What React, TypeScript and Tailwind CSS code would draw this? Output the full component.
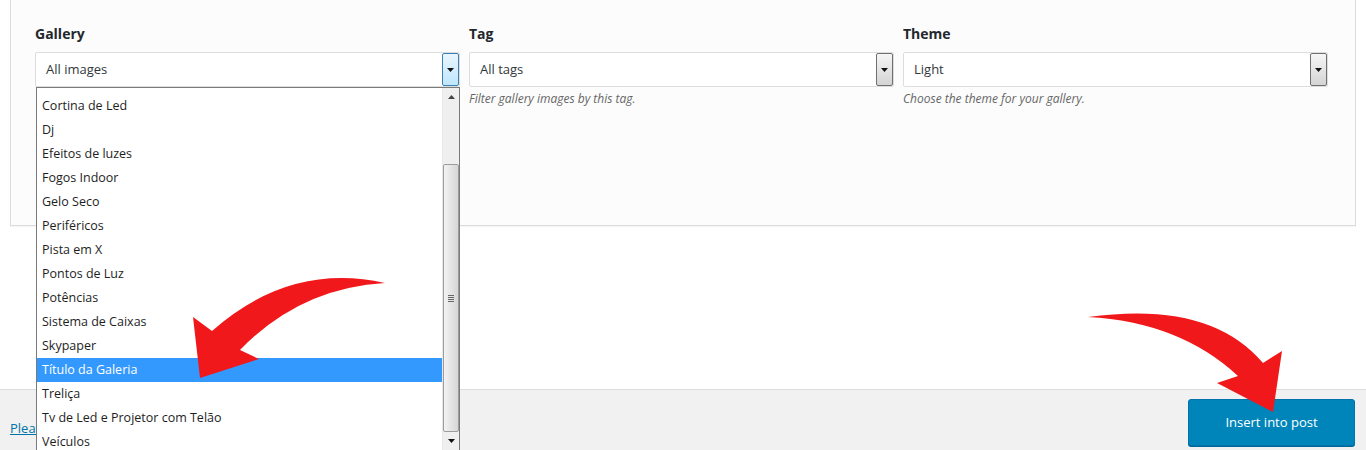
const galleries = [
  "Cortina de Led",
  "Dj",
  "Efeitos de luzes",
  "Fogos Indoor",
  "Gelo Seco",
  "Periféricos",
  "Pista em X",
  "Pontos de Luz",
  "Potências",
  "Sistema de Caixas",
  "Skypaper",
  "Título da Galeria",
  "Treliça",
  "Tv de Led e Projetor com Telão",
  "Veículos",
];

function Caret({ up = false }: { up?: boolean }) {
  return (
    <svg width="7" height="4" viewBox="0 0 7 4" className="block">
      {up ? <path d="M0 4 L3.5 0 L7 4 Z" fill="#444" /> : <path d="M0 0 L7 0 L3.5 4 Z" fill="#111" />}
    </svg>
  );
}

function Select({ value, open = false }: { value: string; open?: boolean }) {
  return (
    <div className="relative flex h-[35px] items-center rounded-[2px] border border-[#dddddd] bg-white">
      <span className="flex-1 pl-[10px] text-[13px] text-[#32373c]">{value}</span>
      <div
        className={
          open
            ? "flex h-[33px] w-[17px] items-center justify-center rounded-[2px] border border-[#3c7fb1] bg-gradient-to-b from-[#eaf6fd] to-[#bee6fd]"
            : "flex h-[33px] w-[17px] items-center justify-center rounded-[2px] border border-[#707070] bg-gradient-to-b from-[#f6f6f6] to-[#d4d4d4]"
        }
      >
        <Caret />
      </div>
    </div>
  );
}

function Field({ label, value, help, open = false }: { label: string; value: string; help?: string; open?: boolean }) {
  return (
    <div className="relative">
      <div className="mb-[9px] text-[14px] font-bold leading-[18px] text-[#23282d]">{label}</div>
      <div className="relative">
        <Select value={value} open={open} />
        {open && <GalleryList />}
      </div>
      {help && <p className="mt-[2px] text-[12px] italic leading-[20px] text-[#666]">{help}</p>}
    </div>
  );
}

function GalleryList() {
  return (
    <div className="absolute left-[1px] right-0 top-full z-10 flex h-[370px] border border-[#7a7a7a] bg-white">
      <ul className="flex-1 pt-[6px]">
        {galleries.map((g) => (
          <li
            key={g}
            className={
              g === "Título da Galeria"
                ? "h-[24px] bg-[#3399ff] pl-[5px] text-[12.5px] leading-[24px] text-white"
                : "h-[24px] pl-[5px] text-[12.5px] leading-[24px] text-[#1e1e1e]"
            }
          >
            {g}
          </li>
        ))}
      </ul>
      <div className="flex w-[17px] flex-col border-l border-[#e8e8e8] bg-[#efefef]">
        <div className="flex h-[17px] items-center justify-center">
          <Caret up />
        </div>
        <div className="h-[59px]" />
        <div className="flex h-[268px] items-center justify-center rounded-[2px] border border-[#9c9c9c] bg-gradient-to-r from-[#f3f3f3] to-[#d6d6d6]">
          <div className="flex flex-col gap-[1px]">
            <div className="h-px w-[6px] bg-[#666]" />
            <div className="h-px w-[6px] bg-[#666]" />
            <div className="h-px w-[6px] bg-[#666]" />
            <div className="h-px w-[6px] bg-[#666]" />
          </div>
        </div>
        <div className="flex h-[17px] items-center justify-center">
          <Caret />
        </div>
      </div>
    </div>
  );
}

export default function App() {
  return (
    <div
      className="relative h-[450px] w-full overflow-hidden bg-white"
      style={{ fontFamily: '"Open Sans", "Noto Sans", sans-serif' }}
    >
      {/* Settings panel */}
      <section className="mx-[10px] h-[226px] border-x border-b border-[#dcdcde] bg-[#fcfcfc] pl-[24px] pt-[25px] shadow-[0_1px_1px_rgba(0,0,0,0.04)]">
        <div className="grid grid-cols-[425px_425px_425px] gap-[9px]">
          <Field label="Gallery" value="All images" open />
          <Field label="Tag" value="All tags" help="Filter gallery images by this tag." />
          <Field label="Theme" value="Light" help="Choose the theme for your gallery." />
        </div>
      </section>

      <div className="h-[163px]" />

      {/* Footer toolbar */}
      <footer className="flex h-[62px] items-start justify-between border-t border-[#dddddd] bg-[#f1f1f1] pl-[10px] pr-[11px] pt-[9px]">
        <a href="#" className="mt-[20px] text-[13px] text-[#0073aa] underline">
          Please
        </a>
        <button className="h-[47px] w-[167px] rounded-[3px] border border-[#0073aa] bg-[#0085ba] text-[13px] text-white shadow-[0_1px_0_#006799]">
          Insert into post
        </button>
      </footer>

      {/* Red annotation arrows */}
      <svg className="pointer-events-none absolute left-0 top-0 z-20" width="1366" height="450" viewBox="0 0 1366 450">
        <path
          d="M385 283 Q 290 262 212 331 L 193 317 L 200 378 L 259 359 L 240 350 Q 300 288 385 283 Z"
          fill="#f0181a"
        />
        <path
          d="M1088 317 Q 1210 300 1263 363 L 1282 351 L 1273 412 L 1217 383 L 1238 376 Q 1180 322 1088 317 Z"
          fill="#f0181a"
        />
      </svg>
    </div>
  );
}
